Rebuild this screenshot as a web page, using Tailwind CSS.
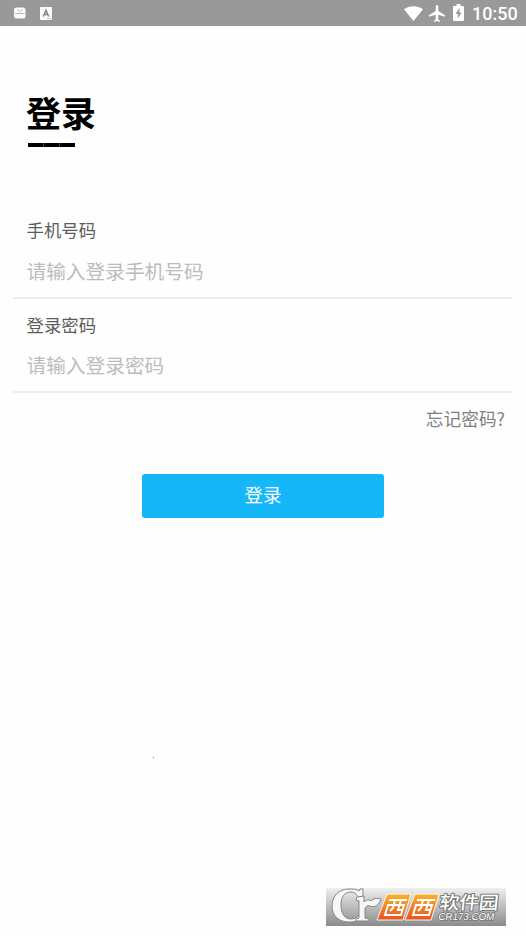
<!DOCTYPE html>
<html lang="zh-CN">
<head>
<meta charset="utf-8">
<title>登录</title>
<script src="https://cdn.jsdelivr.net/npm/@tailwindcss/browser@4"></script>
</head>
<body class="bg-white">
<div class="relative flex h-[936px] w-[526px] flex-col overflow-hidden bg-[#fefefe] font-['Noto_Sans_CJK_SC','Noto_Sans',sans-serif]">
  <header class="flex h-[26px] shrink-0 items-center justify-between bg-[#999] pl-[14px] pr-[9px] text-white">
    <div class="flex items-center gap-[14px]">
      <svg width="12" height="12" viewBox="0 0 12 12"><rect y=".5" width="11.5" height="11" rx="2.5" fill="#fafafa"/><path d="M3 2.500l2.700 2.200L8.500 2.500M1 6.500h9.500" fill="none" stroke="#bbb" stroke-width="1"/></svg>
      <svg width="12" height="13" viewBox="0 0 12 13"><rect width="12" height="13" rx="1" fill="#fafafa"/><path d="M3.300 9.500L6 3.200l2.700 6.300M4.200 7.500h3.600" fill="none" stroke="#888" stroke-width="1.500"/><path d="M6.500 11.500H11" stroke="#ccc"/></svg>
    </div>
    <div class="flex items-center">
      <svg class="mr-[6px]" width="19" height="15" viewBox="0 0 19 15"><path d="M9.500 15L0 3.300C5 -.9 14-.9 19 3.300z" fill="#fff"/></svg>
      <svg class="mr-[8px]" width="16" height="17" viewBox="2 2 19 20"><path d="M21 16v-2l-8-5V3.500C13 2.700 12.300 2 11.500 2S10 2.700 10 3.500V9l-8 5v2l8-2.500V19l-2 1.500V22l3.500-1 3.500 1v-1.500L13 19v-5.500z" fill="#fff"/></svg>
      <svg class="mr-[8px] -mt-px" width="11" height="17" viewBox="0 0 11 17"><path d="M1 2h2.500V0h4v2H10q1 0 1 1v13q0 1-1 1H1q-1 0-1-1V3q0-1 1-1z" fill="#fff"/><path d="M6.500 4L2.500 10h2.400v4.500l3.700-6H6.500z" fill="#999"/></svg>
      <span class="w-[45px] whitespace-nowrap pt-px font-[Roboto,sans-serif] text-[18px] font-medium leading-[24px]">10:50</span>
    </div>
  </header>
  <main class="flex flex-col">
    <h1 class="ml-[26px] mt-[60px] h-[51px] text-[35px] font-bold leading-[51px] text-black">登录</h1>
    <div class="ml-[28px] mt-[6px] flex h-[4px] w-[47px]"><i class="flex-1 border-r border-[#444] bg-black"></i><i class="flex-1 border-r border-[#444] bg-black"></i><i class="flex-1 bg-black"></i></div>
    <section class="ml-[13px] mt-[70px] flex h-[82px] w-[499px] flex-col border-b-2 border-[#eee] pl-[13.500px]">
      <label class="h-[26px] text-[17.400px] leading-[26px] text-[#5c5c5c]">手机号码</label>
      <div class="mt-[13px] h-[30px] text-[19.700px] leading-[30px] text-[#bcbcbc]">请输入登录手机号码</div>
    </section>
    <section class="ml-[13px] mt-[13px] flex h-[81px] w-[499px] flex-col border-b-2 border-[#eee] pl-[13.500px]">
      <label class="h-[26px] text-[17.400px] leading-[26px] text-[#5c5c5c]">登录密码</label>
      <div class="mt-[12px] h-[30px] text-[19.700px] leading-[30px] text-[#bcbcbc]">请输入登录密码</div>
    </section>
    <a class="mr-[21px] mt-[12px] h-[26px] self-end text-[17.700px] leading-[26px] text-[#808080]">忘记密码?</a>
    <button class="mt-[43px] h-[44px] w-[242px] self-center rounded-[3px] bg-[#16b7f8] pb-[4px] text-[18.500px] leading-[40px] text-white">登录</button>
  </main>
  <i class="absolute left-[153px] top-[757px] size-px bg-[#777]"></i>
  <svg class="absolute left-[326px] top-[888px]" width="180" height="38" viewBox="0 0 180 38">
    <defs>
      <linearGradient id="bg" x2="0" y2="1"><stop stop-color="#efefef"/><stop offset=".5" stop-color="#bdbdbd"/><stop offset="1" stop-color="#8b8b8b"/></linearGradient>
      <linearGradient id="or" x2="0" y2="1"><stop stop-color="#f8b62b"/><stop offset="1" stop-color="#e9501f"/></linearGradient>
    </defs>
    <rect width="180" height="38" fill="url(#bg)"/>
    <g stroke="#858585" stroke-width="1" fill="#f7f7f7" stroke-linejoin="round">
      <path d="M37 1v12h-3C32 7 29 4 25 4c-7 0-10 5-10 13 0 9 4 14 10 14 4 0 7-2 9-5l2 2c-2 4-7 6-13 6C13 34 6 28 6 18 6 8 13 1 23 1c4 0 8 0 10 2l1-2z"/>
      <path d="M31 9l7-1v6c2-2 5-3 7-1 2-3 6-3 10-2-2 6-6 9-11 7-3-1-5 1-5 4v8l4 1v2H30v-2l3-1V13l-3-1z"/>
    </g>
    <path d="M61 6h24l-8 26H51zM89 6h24l-8 26H79z" fill="url(#or)" stroke="#fff" stroke-opacity=".9" stroke-width="1"/>
    <g fill="none" stroke="#fff" stroke-width="2"><path id="xi" d="M63 12h18M62 17h16l-3 10H59zM69 12l-2 8-3 3M75 12l-3 10h4"/><path d="M91 12h18M90 17h16l-3 10H87zM97 12l-2 8-3 3M103 12l-3 10h4"/></g>
    <text transform="translate(113 21) skewX(-6)" textLength="59" lengthAdjust="spacingAndGlyphs" font-family="Noto Sans CJK SC,sans-serif" font-weight="500" font-size="18" fill="#fff" stroke="#777" stroke-width="2" stroke-linejoin="round" paint-order="stroke">软件园</text>
    <text transform="translate(112 31.500) skewX(-8)" textLength="56" lengthAdjust="spacingAndGlyphs" font-family="Liberation Sans,sans-serif" font-size="10" fill="#fff" stroke="#777" stroke-width="1.800" stroke-linejoin="round" paint-order="stroke">CR173.COM</text>
  </svg>
</div>
</body>
</html>
